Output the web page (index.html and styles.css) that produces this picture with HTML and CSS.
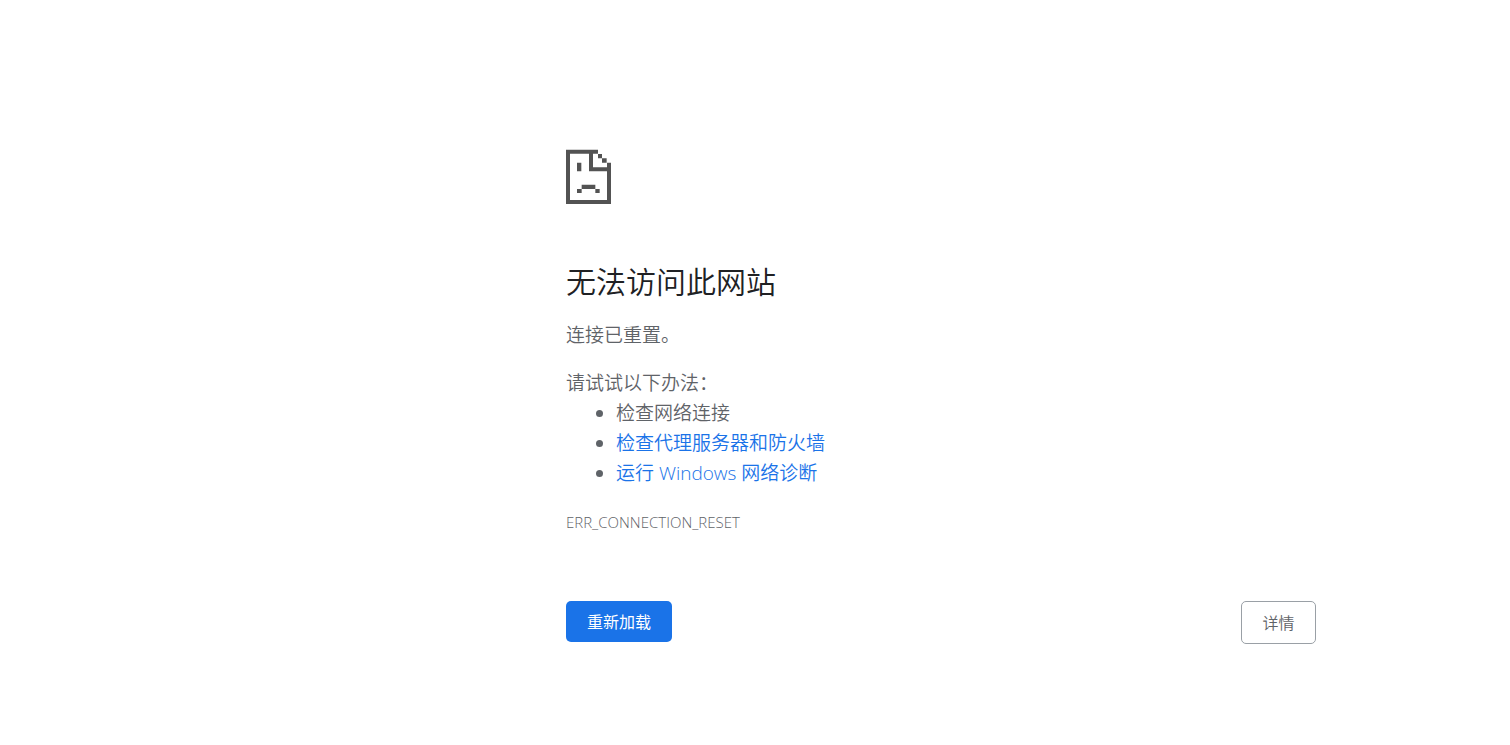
FILE: index.html
```html
<!DOCTYPE html>
<html lang="zh-CN">
<head>
<meta charset="utf-8">
<meta name="viewport" content="width=device-width, initial-scale=1">
<title>无法访问此网站</title>
<link rel="stylesheet" href="styles.css">
</head>
<body class="page">
<main class="error">
  <svg class="error-icon" viewBox="0 0 135 165" aria-hidden="true">
    <path d="M0 2H96V14H12V153H123V67H69V14H81V55H123V41H135V165H0ZM96 15H108V28H96ZM108 28H122V41H108ZM33 41H46V67H33ZM47 107H88V120H47ZM33 120H47V132H33ZM88 120H101V132H88Z"/>
  </svg>
  <h1 class="title">无法访问此网站</h1>
  <p class="summary">连接已重置。</p>
  <section class="suggestions">
    <p class="suggestions-title">请试试以下办法：</p>
    <ul class="suggestions-list">
      <li>检查网络连接</li>
      <li><a class="link" href="#proxy">检查代理服务器和防火墙</a></li>
      <li><a class="link" href="#diagnose">运行 Windows 网络诊断</a></li>
    </ul>
  </section>
  <p class="code">ERR_CONNECTION_RESET</p>
  <div class="actions">
    <button class="button button-primary" type="button">重新加载</button>
    <button class="button button-secondary" type="button">详情</button>
  </div>
</main>
</body>
</html>
```
FILE: styles.css
```css
.page {
  margin: 0;
  background: #fff;
  color: #5f6368;
  font-family: "Open Sans", "Noto Sans CJK SC", sans-serif;
  font-size: 19px;
  font-weight: 350;
  line-height: 30px;
}

.error {
  max-width: 750px;
  margin-left: 566px;
  margin-right: 24px;
  padding-top: 149px;
}

.error-icon {
  display: block;
  width: 45px;
  height: 55px;
  fill: #535353;
}

.title {
  margin: 60px 0 20px;
  color: #202124;
  font-size: 30px;
  font-weight: 350;
  line-height: 36px;
}

.summary {
  margin: 0 0 18px;
}

.suggestions-title {
  margin: 0;
}

.suggestions-list {
  margin: 0;
  padding-left: 50px;
}

.link {
  color: #1a73e8;
  text-decoration: none;
}

.code {
  margin: 22px 0 0;
  font-size: 15px;
  font-weight: 300;
  line-height: 24px;
}

.actions {
  display: flex;
  align-items: flex-start;
  justify-content: space-between;
  margin-top: 67px;
}

.button {
  box-sizing: border-box;
  padding: 9px 20px 7px;
  border-radius: 5px;
  font-family: inherit;
  font-size: 16px;
  line-height: 25px;
  cursor: pointer;
}

.button-primary {
  min-width: 106px;
  border: 0;
  background: #1a73e8;
  color: #fff;
  font-weight: 400;
}

.button-secondary {
  min-width: 75px;
  border: 1px solid #9aa0a6;
  background: #fff;
  color: #5f6368;
  font-weight: 350;
}
```
